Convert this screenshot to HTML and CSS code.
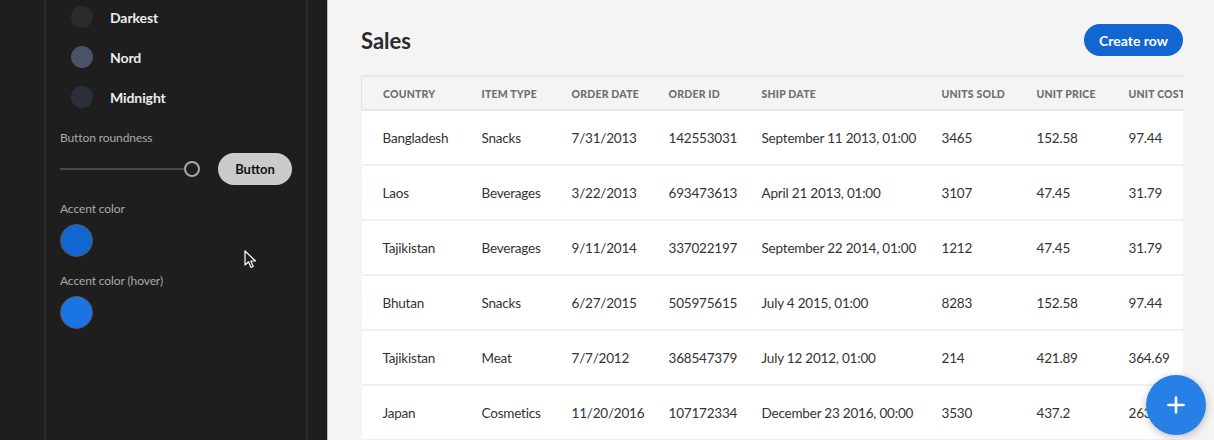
FILE: index.html
```html
<!DOCTYPE html>
<html lang="en">
<head>
<meta charset="utf-8">
<title>Sales</title>
<link rel="stylesheet" href="styles.css">
</head>
<body>
<div class="app">
  <div class="rail"></div>
  <aside class="panel">
    <ul class="themes">
      <li class="theme"><span class="swatch sw-darkest"></span><span class="theme-name">Darkest</span></li>
      <li class="theme"><span class="swatch sw-nord"></span><span class="theme-name">Nord</span></li>
      <li class="theme"><span class="swatch sw-midnight"></span><span class="theme-name">Midnight</span></li>
    </ul>
    <div class="field-label">Button roundness</div>
    <div class="slider-row">
      <div class="slider"><div class="track"></div><div class="thumb"></div></div>
      <button class="preview-btn">Button</button>
    </div>
    <div class="field-label label-accent">Accent color</div>
    <div class="color-dot dot-accent"></div>
    <div class="field-label label-accent">Accent color (hover)</div>
    <div class="color-dot dot-hover"></div>
    <svg class="cursor" width="13" height="19" viewBox="0 0 13 19"><path d="M1 1 L1 15 L4.5 11.8 L7 17.5 L9.2 16.5 L6.8 11 L11.5 11 Z" fill="#1e1e1e" stroke="#ffffff" stroke-width="1.2" stroke-linejoin="round"/></svg>
  </aside>
  <div class="gutter"></div>
  <main class="main">
    <header class="main-head">
      <h1 class="title">Sales</h1>
      <button class="create-btn">Create row</button>
    </header>
    <div class="table-wrap">
      <table class="grid">
        <colgroup>
          <col class="c1"><col class="c2"><col class="c3"><col class="c4"><col class="c5"><col class="c6"><col class="c7"><col class="c8">
        </colgroup>
        <thead>
          <tr><th>Country</th><th>Item type</th><th>Order date</th><th>Order ID</th><th>Ship date</th><th>Units sold</th><th>Unit price</th><th>Unit cost</th></tr>
        </thead>
        <tbody>
          <tr><td>Bangladesh</td><td>Snacks</td><td>7/31/2013</td><td>142553031</td><td>September 11 2013, 01:00</td><td>3465</td><td>152.58</td><td>97.44</td></tr>
          <tr><td>Laos</td><td>Beverages</td><td>3/22/2013</td><td>693473613</td><td>April 21 2013, 01:00</td><td>3107</td><td>47.45</td><td>31.79</td></tr>
          <tr><td>Tajikistan</td><td>Beverages</td><td>9/11/2014</td><td>337022197</td><td>September 22 2014, 01:00</td><td>1212</td><td>47.45</td><td>31.79</td></tr>
          <tr><td>Bhutan</td><td>Snacks</td><td>6/27/2015</td><td>505975615</td><td>July 4 2015, 01:00</td><td>8283</td><td>152.58</td><td>97.44</td></tr>
          <tr><td>Tajikistan</td><td>Meat</td><td>7/7/2012</td><td>368547379</td><td>July 12 2012, 01:00</td><td>214</td><td>421.89</td><td>364.69</td></tr>
          <tr><td>Japan</td><td>Cosmetics</td><td>11/20/2016</td><td>107172334</td><td>December 23 2016, 00:00</td><td>3530</td><td>437.2</td><td>263.33</td></tr>
        </tbody>
      </table>
    </div>
    <button class="fab" aria-label="Add">
      <svg width="18" height="18" viewBox="0 0 18 18"><path d="M9 1.5 V16.5 M1.5 9 H16.5" stroke="#fff" stroke-width="2.6" stroke-linecap="round"/></svg>
    </button>
  </main>
</div>
</body>
</html>
```

FILE: styles.css
```css
* { box-sizing: border-box; }
html, body {
  margin: 0;
  padding: 0;
  height: 440px;
  overflow: hidden;
  font-family: Lato, "Noto Sans", "Liberation Sans", sans-serif;
}
.app {
  display: flex;
  height: 440px;
  background: #1e1e1e;
}
.rail {
  width: 46px;
  flex: none;
  border-right: 2px solid #2c2c2c;
}
.panel {
  position: relative;
  width: 262px;
  flex: none;
  border-right: 2px solid #2c2c2c;
  padding-left: 14px;
}
.gutter {
  width: 20px;
  flex: none;
  border-right: 1px solid #bcbcbc;
}
.themes {
  list-style: none;
  margin: -3px 0 0 0;
  padding: 0;
}
.theme {
  height: 40px;
  display: flex;
  align-items: center;
  padding-left: 11px;
}
.swatch {
  width: 22px;
  height: 22px;
  border-radius: 50%;
  margin-right: 17px;
}
.sw-darkest { background: #2b2b2b; }
.sw-nord { background: #4b5368; }
.sw-midnight { background: #2b2f38; }
.theme-name {
  color: #ececec;
  font-weight: 700;
  font-size: 14px;
  letter-spacing: -0.1px;
}
.field-label {
  color: #a9a9a9;
  font-size: 12px;
  letter-spacing: -0.1px;
  line-height: 18px;
  margin-top: 12px;
}
.slider-row {
  display: flex;
  align-items: center;
  margin-top: 6px;
  height: 32px;
}
.slider {
  position: relative;
  width: 140px;
  height: 16px;
  display: flex;
  align-items: center;
}
.track {
  width: 124px;
  height: 2px;
  background: #4a4a4a;
}
.thumb {
  width: 16px;
  height: 16px;
  border-radius: 50%;
  border: 2px solid #a8a8a8;
  background: #1e1e1e;
}
.preview-btn {
  margin-left: 18px;
  width: 74px;
  height: 32px;
  border: none;
  border-radius: 16px;
  background: #cbcbcb;
  color: #111;
  font-family: inherit;
  font-weight: 700;
  font-size: 13px;
  padding: 0;
}
.label-accent { margin-top: 15px; }
.color-dot {
  width: 33px;
  height: 33px;
  border-radius: 50%;
  border: 1px solid #5a5a5a;
  margin-top: 6px;
}
.dot-accent { background: #1166d2; }
.dot-hover { background: #1a74e6; }
.cursor {
  position: absolute;
  left: 198px;
  top: 250px;
}
.main {
  position: relative;
  flex: 1;
  background: #f4f4f4;
  padding: 24px 31px 0 33px;
  overflow: hidden;
}
.main-head {
  display: flex;
  align-items: center;
  justify-content: space-between;
  height: 32px;
}
.title {
  margin: 0;
  font-size: 22px;
  font-weight: 700;
  color: #2b2b2b;
}
.create-btn {
  height: 32px;
  width: 99px;
  border: none;
  border-radius: 16px;
  background: #1166d2;
  color: #fff;
  font-family: inherit;
  font-weight: 700;
  font-size: 14px;
  padding: 0;
}
.table-wrap {
  margin-top: 19px;
  overflow: hidden;
  width: 822px;
}
.grid {
  border-collapse: collapse;
  table-layout: fixed;
  width: 846px;
}
.c1 { width: 99px; }
.c2 { width: 90px; }
.c3 { width: 97px; }
.c4 { width: 93px; }
.c5 { width: 180px; }
.c6 { width: 95px; }
.c7 { width: 92px; }
.c8 { width: 100px; }
.grid thead tr {
  border-top: 2px solid #e8e8e8;
  border-bottom: 2px solid #e6e6e6;
  border-left: 1px solid #e4e4e4;
}
.grid th {
  height: 34px;
  text-align: left;
  padding: 1px 0 0 21px;
  font-size: 10.5px;
  font-weight: 900;
  letter-spacing: 0.2px;
  text-transform: uppercase;
  color: #6f6f6f;
  white-space: nowrap;
}
.grid tbody tr {
  background: #fff;
  border-bottom: 2px solid #f0f0f0;
}
.grid td {
  height: 55px;
  padding: 0 0 0 21px;
  font-size: 13.5px;
  letter-spacing: -0.2px;
  color: #333;
  white-space: nowrap;
}
.fab {
  position: absolute;
  right: 8px;
  bottom: 5px;
  width: 60px;
  height: 60px;
  border-radius: 50%;
  border: none;
  background: #2680e6;
  box-shadow: 0 2px 8px rgba(0,0,0,0.25);
  display: flex;
  align-items: center;
  justify-content: center;
  padding: 0;
}
```
